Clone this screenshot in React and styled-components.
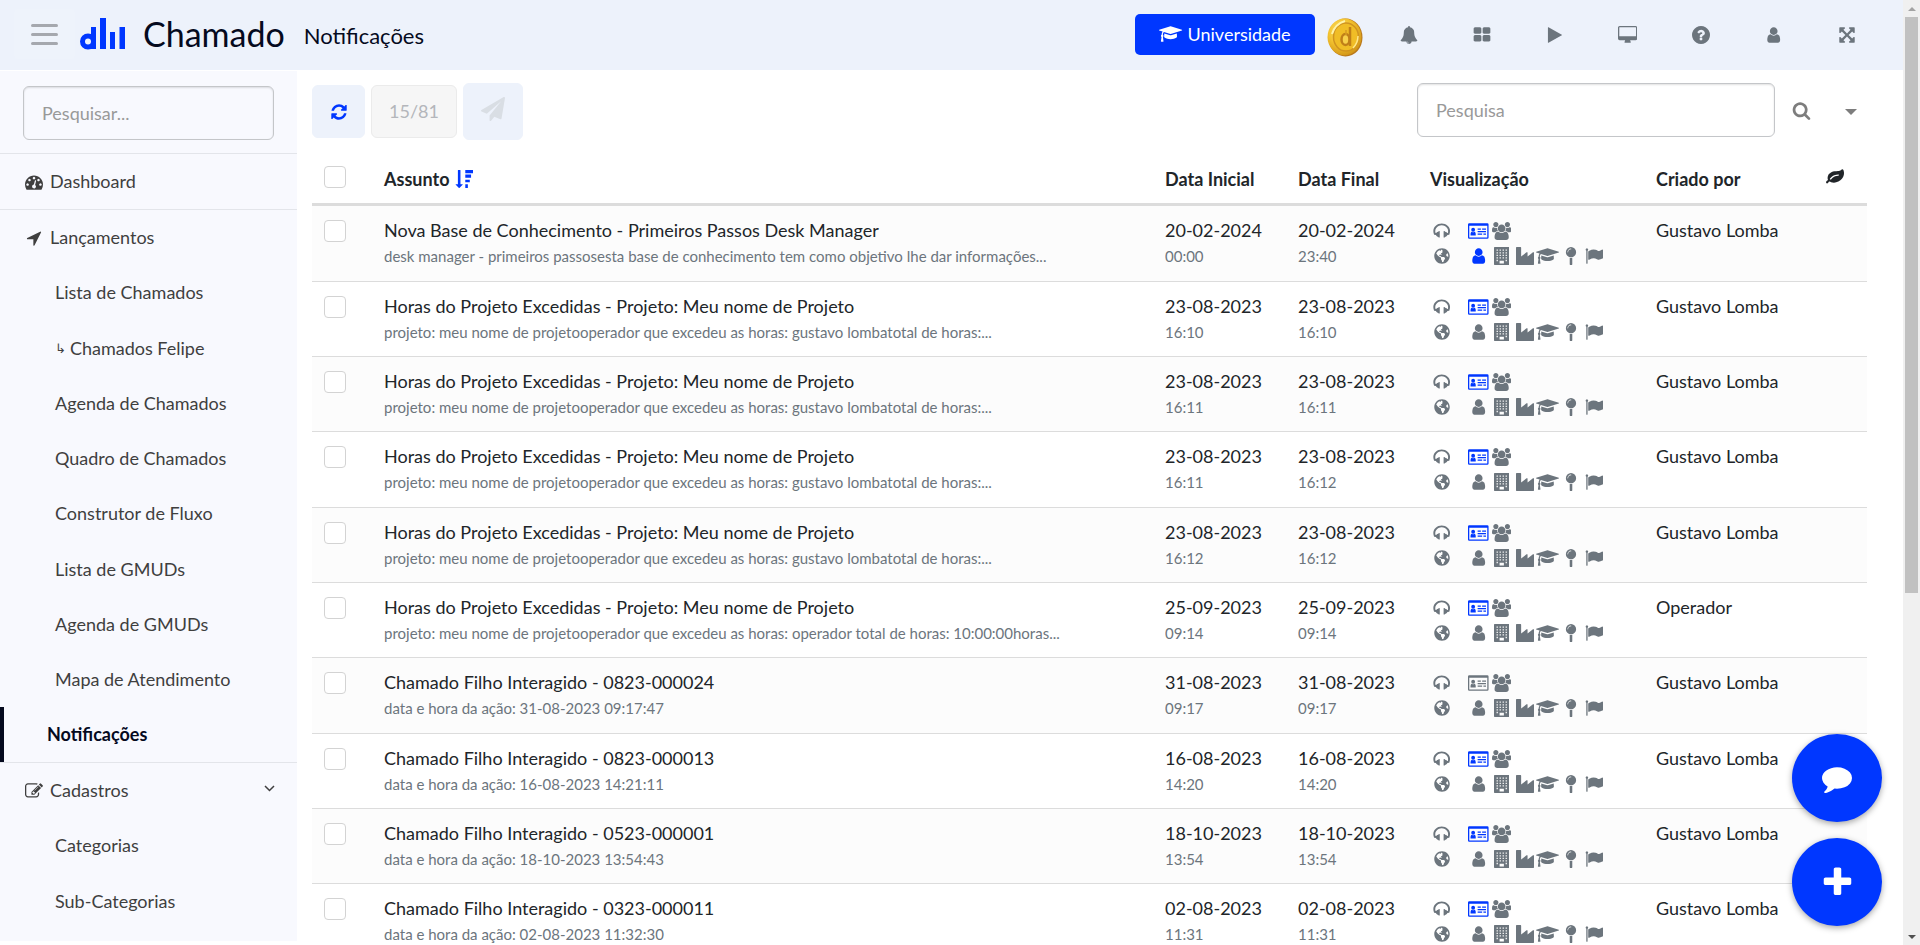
import { useState } from "react";
import styled, { createGlobalStyle } from "styled-components";
import { FaGlobeAmericas } from "react-icons/fa";

const GlobalStyle = createGlobalStyle`
  * {
    box-sizing: border-box;
  }
  body {
    margin: 0;
    background: #fff;
    color: #212529;
    font-family: Lato, "Liberation Sans", sans-serif;
    font-size: 18px;
    line-height: 27px;
  }
  button,
  input {
    font: inherit;
  }
`;

const Page = styled.div`
  display: flex;
  height: 100vh;
  overflow: hidden;
`;

const Screen = styled.div`
  flex: 1;
  min-width: 0;
  display: flex;
  flex-direction: column;
`;

const Header = styled.header`
  flex: none;
  display: flex;
  align-items: center;
  justify-content: space-between;
  height: 70px;
  padding: 0 20px 2px 14px;
  background: #edf2fb;
`;

const Brand = styled.div`
  display: flex;
  align-items: center;
`;

const MenuButton = styled.button`
  display: flex;
  flex-direction: column;
  align-items: center;
  justify-content: center;
  gap: 6px;
  width: 61px;
  height: 50px;
  padding: 0;
  margin-right: 5px;
  border: 0;
  border-radius: 4px;
  background: #eef3fb;
`;

const MenuLine = styled.span`
  width: 27px;
  height: 3px;
  border-radius: 2px;
  background: #a5a8ae;
`;

const AppName = styled.h1`
  margin: 0 19px 0 18px;
  font-size: 34px;
  font-weight: 400;
  line-height: 40px;
  color: #050a1e;
`;

const PageName = styled.h2`
  margin: 0;
  padding-top: 4px;
  font-size: 22px;
  font-weight: 400;
  line-height: 30px;
  color: #050a1e;
`;

const Actions = styled.div`
  display: flex;
  align-items: center;
`;

const University = styled.button`
  display: flex;
  align-items: center;
  justify-content: center;
  gap: 5px;
  width: 180px;
  height: 41px;
  padding: 0;
  border: 0;
  border-radius: 5px;
  background: #0037ff;
  color: #fff;
`;

const CoinButton = styled.button`
  display: flex;
  padding: 0;
  margin: 6px 9px 0 12px;
  border: 0;
  background: none;
`;

const HeaderButton = styled.button`
  display: flex;
  align-items: center;
  justify-content: center;
  width: 73px;
  height: 50px;
  padding: 2px 0 0;
  border: 0;
  background: none;
  color: #6c757d;
`;

const Body = styled.div`
  flex: 1;
  min-height: 0;
  display: flex;
  padding-top: 1px;
`;

const Sidebar = styled.aside`
  flex: none;
  width: 297px;
  margin-bottom: 4px;
  overflow: hidden;
  background: #f8f9fe;
`;

const TextField = styled.input`
  width: 100%;
  height: 54px;
  padding: 0 18px;
  border: 1px solid #c4c6c9;
  border-radius: 6px;
  background: transparent;
  box-shadow: inset 0 1px 2px rgba(0, 0, 0, 0.12);
  color: #212529;

  &::placeholder {
    color: #999;
    opacity: 1;
  }
`;

const SidebarSearch = styled.div`
  display: flex;
  padding: 15px 23px 13px;
`;

const NavGroup = styled.nav`
  border-top: 1px solid #e3e5ea;
`;

const GroupLink = styled.a`
  display: flex;
  align-items: center;
  height: 55px;
  padding: 0 22px 0 24px;
  color: #3f3f3f;
  text-decoration: none;
`;

const GroupIcon = styled.span`
  display: flex;
  justify-content: center;
  width: 20px;
  margin-right: 6px;
`;

const GroupLabel = styled.span`
  flex: 1;
`;

const SubLink = styled.a`
  display: flex;
  align-items: center;
  gap: 4px;
  height: 55px;
  padding-left: ${({ $active }) => ($active ? "43px" : "55px")};
  border-left: ${({ $active }) => ($active ? "4px solid #050a1e" : "0")};
  color: ${({ $active }) => ($active ? "#050a1e" : "#3f3f3f")};
  font-weight: ${({ $active }) => ($active ? 700 : 400)};
  text-decoration: none;

  &:nth-child(4n + 3) {
    height: 56px;
  }
`;

const Branch = styled.span`
  font-family: "DejaVu Sans", sans-serif;
  font-size: 13px;
`;

const Content = styled.main`
  flex: 1;
  min-width: 0;
  padding: 12px 36px 0 15px;
`;

const Toolbar = styled.div`
  display: flex;
  align-items: center;
  justify-content: space-between;
  height: 57px;
`;

const ToolGroup = styled.div`
  display: flex;
  align-items: center;
  gap: 6px;
`;

const ToolButton = styled.button`
  display: flex;
  align-items: center;
  justify-content: center;
  width: ${({ $width }) => $width}px;
  height: ${({ $height }) => $height || 53}px;
  padding: 0;
  border: 1px solid ${({ $plain }) => ($plain ? "#ebebeb" : "#edf2fb")};
  border-radius: 6px;
  background: ${({ $plain }) => ($plain ? "#f6f6f6" : "#edf2fb")};
  color: ${({ $color }) => $color};
`;

const SendButton = styled(ToolButton)`
  padding-bottom: 6px;
`;

const SearchGroup = styled.div`
  display: flex;
  align-items: center;
  height: 54px;
  margin-bottom: 3px;
`;

const SearchField = styled.div`
  display: flex;
  width: 358px;
`;

const SearchButton = styled.button`
  display: flex;
  align-items: center;
  justify-content: center;
  width: ${({ $width }) => $width}px;
  height: 54px;
  padding: 0;
  border: 0;
  background: none;
  color: #7d7d7d;
`;

const MoreButton = styled(SearchButton)`
  padding: 3px 0 0 6px;
`;

const Table = styled.table`
  width: 100%;
  margin-top: 8px;
  border-collapse: separate;
  border-spacing: 0;
  table-layout: fixed;
`;

const Col = styled.col`
  width: ${({ $width }) => $width};
`;

const Th = styled.th`
  height: 58px;
  padding: 7px 0 0;
  border-bottom: 3px solid #dcdcdc;
  font-weight: 700;
  text-align: left;
`;

const SortButton = styled.button`
  display: flex;
  align-items: center;
  gap: 6px;
  padding: 0;
  border: 0;
  background: none;
  color: inherit;

  svg {
    color: #0037ff;
  }
`;

const Row = styled.tr`
  height: 75px;

  &:nth-child(3n + 1) {
    height: 76px;
  }
  &:nth-child(odd) {
    background: #fcfcfc;
  }
`;

const Td = styled.td`
  padding: 11px 0 0;
  border-bottom: 1px solid #dcdcdc;
  vertical-align: top;
  white-space: nowrap;
`;

const CheckTh = styled(Th)`
  padding: 2px 0 0 12px;
`;

const CheckTd = styled(Td)`
  padding: 14px 0 0 12px;
`;

const VisibilityTd = styled(Td)`
  padding: 12px 0 0;
`;

const Check = styled.input`
  appearance: none;
  display: block;
  width: 22px;
  height: 22px;
  margin: 0;
  border: 1px solid #d3d3d3;
  border-radius: 4px;
  background: #fff;

  &:checked {
    background: #0037ff;
  }
`;

const Main = styled.div`
  overflow: hidden;
  text-overflow: ellipsis;
`;

const Sub = styled.div`
  overflow: hidden;
  text-overflow: ellipsis;
  font-size: 15px;
  line-height: 25px;
  color: #6c757d;
`;

const Visibility = styled.div`
  display: flex;
  align-items: center;
  height: 25px;
  color: #6c757d;
`;

const Slot = styled.span`
  display: flex;
  justify-content: center;
  width: ${({ $first }) => ($first ? "24px" : "23px")};
  margin-right: ${({ $first }) => ($first ? "13px" : "0")};
  color: ${({ $on }) => ($on ? "#0037ff" : "inherit")};
`;

const Floating = styled.div`
  position: fixed;
  right: 38px;
  bottom: 19px;
  display: flex;
  flex-direction: column;
  gap: 16px;
`;

const RoundButton = styled.button`
  display: flex;
  align-items: center;
  justify-content: center;
  width: 90px;
  height: 88px;
  padding: 0;
  border: 0;
  border-radius: 50%;
  background: #0037ff;
  box-shadow: 0 2px 6px rgba(0, 0, 0, 0.35);
  color: #fff;
`;

const ScrollTrack = styled.div`
  flex: none;
  display: flex;
  flex-direction: column;
  align-items: center;
  justify-content: space-between;
  width: 17px;
  background: #f0f0f0;
`;

const ScrollArrow = styled.div`
  display: flex;
  align-items: center;
  justify-content: center;
  height: 17px;
  color: ${({ $color }) => $color};
`;

const ScrollRail = styled.div`
  flex: 1;
  width: 13px;
`;

const ScrollThumb = styled.div`
  height: 63.2%;
  background: #c1c1c1;
`;

const ICONS = {
  user: [1536, "M1408 1399q0 109-62.5 187t-150.5 78h-854q-88 0-150.5-78t-62.5-187q0-85 8.5-160.5t31.5-152 58.5-131 94-89 134.5-34.5q131 128 313 128t313-128q76 0 134.5 34.5t94 89 58.5 131 31.5 152 8.5 160.5zm-256-887q0 159-112.5 271.5t-271.5 112.5-271.5-112.5-112.5-271.5 112.5-271.5 271.5-112.5 271.5 112.5 112.5 271.5z"],
  refresh: [1792, "M1639 1056q0 5-1 7-64 268-268 434.5t-478 166.5q-146 0-282.5-55t-243.5-157l-129 129q-19 19-45 19t-45-19-19-45v-448q0-26 19-45t45-19h448q26 0 45 19t19 45-19 45l-137 137q71 66 161 102t187 36q134 0 250-65t186-179q11-17 53-117 8-23 30-23h192q13 0 22.5 9.5t9.5 22.5zm25-800v448q0 26-19 45t-45 19h-448q-26 0-45-19t-19-45 19-45l138-138q-148-137-349-137-134 0-250 65t-186 179q-11 17-53 117-8 23-30 23h-199q-13 0-22.5-9.5t-9.5-22.5v-7q65-268 270-434.5t480-166.5q146 0 284 55.5t245 156.5l130-129q19-19 45-19t45 19 19 45z"],
  comment: [1792, "M1792 896q0 174-120 321.5t-326 233-450 85.5q-70 0-145-8-198 175-460 242-49 14-114 22-17 2-30.5-9t-17.5-29v-1q-3-4-.5-12t2-10 4.5-9.5l6-9 7-8.5 8-9q7-8 31-34.5t34.5-38 31-39.5 32.5-51 27-59 26-76q-157-89-247.5-220t-90.5-281q0-130 71-248.5t191-204.5 286-136.5 348-50.5q244 0 450 85.5t326 233 120 321.5z"],
  plus: [1792, "M1600 736v192q0 40-28 68t-68 28h-416v416q0 40-28 68t-68 28h-192q-40 0-68-28t-28-68v-416h-416q-40 0-68-28t-28-68v-192q0-40 28-68t68-28h416v-416q0-40 28-68t68-28h192q40 0 68 28t28 68v416h416q40 0 68 28t28 68z"],
  arrow: [1792, "M1593 349l-640 1280q-17 35-57 35-5 0-15-2-22-5-35.5-22.5t-13.5-39.5v-576h-576q-22 0-39.5-13.5t-22.5-35.5 4-42 29-30l1280-640q13-7 29-7 27 0 45 19 15 14 18.5 34.5t-6.5 39.5z"],
  search: [1792, "M1216 832q0-185-131.5-316.5t-316.5-131.5-316.5 131.5-131.5 316.5 131.5 316.5 316.5 131.5 316.5-131.5 131.5-316.5zm512 832q0 52-38 90t-90 38q-54 0-90-38l-343-342q-179 124-399 124-143 0-273.5-55.5t-225-150-150-225-55.5-273.5 55.5-273.5 150-225 225-150 273.5-55.5 273.5 55.5 225 150 150 225 55.5 273.5q0 220-124 399l343 343q37 37 37 90z"],
  bell: [1792, "M912 1696q0-16-16-16-59 0-101.5-42.5t-42.5-101.5q0-16-16-16t-16 16q0 73 51.5 124.5t124.5 51.5q16 0 16-16zm816-288q0 52-38 90t-90 38h-448q0 106-75 181t-181 75-181-75-75-181h-448q-52 0-90-38t-38-90q50-42 91-88t85-119.5 74.5-158.5 50-206 19.5-260q0-152 117-282.5t307-158.5q-8-19-8-39 0-40 28-68t68-28 68 28 28 68q0 20-8 39 190 28 307 158.5t117 282.5q0 139 19.5 260t50 206 74.5 158.5 85 119.5 91 88z"],
  users: [1920, "M593 896q-162 5-265 128h-134q-82 0-138-40.5t-56-118.5q0-353 124-353 6 0 43.5 21t97.5 42.5 119 21.5q67 0 133-23-5 37-5 66 0 139 81 256zm1071 637q0 120-73 189.5t-194 69.5h-874q-121 0-194-69.5t-73-189.5q0-53 3.5-103.5t14-109 26.5-108.5 43-97.5 62-81 85.5-53.5 111.5-20q10 0 43 21.5t73 48 107 48 135 21.5 135-21.5 107-48 73-48 43-21.5q61 0 111.5 20t85.5 53.5 62 81 43 97.5 26.5 108.5 14 109 3.5 103.5zm-1024-1277q0 106-75 181t-181 75-181-75-75-181 75-181 181-75 181 75 75 181zm704 384q0 159-112.5 271.5t-271.5 112.5-271.5-112.5-112.5-271.5 112.5-271.5 271.5-112.5 271.5 112.5 112.5 271.5zm576 225q0 78-56 118.5t-138 40.5h-134q-103-123-265-128 81-117 81-256 0-29-5-66 66 23 133 23 59 0 119-21.5t97.5-42.5 43.5-21q124 0 124 353zm-128-609q0 106-75 181t-181 75-181-75-75-181 75-181 181-75 181 75 75 181z"],
  graduation: [2304, "M1774 836l18 316q4 69-82 128t-235 93.5-323 34.5-323-34.5-235-93.5-82-128l18-316 574 181q22 7 48 7t48-7zm530-324q0 23-22 31l-1120 352q-4 1-10 1t-10-1l-652-206q-43 34-71 111.5t-34 178.5q63 36 63 109 0 69-58 107l58 433q2 14-8 25-9 11-24 11h-192q-15 0-24-11-10-11-8-25l58-433q-58-38-58-107 0-73 65-111 11-207 98-330l-333-104q-22-8-22-31t22-31l1120-352q4-1 10-1t10 1l1120 352q22 8 22 31z"],
  industry: [1792, "M448 0q26 0 45 19t19 45v891l536-429q17-14 40-14 26 0 45 19t19 45v379l536-429q17-14 40-14 26 0 45 19t19 45v1152q0 26-19 45t-45 19h-1664q-26 0-45-19t-19-45v-1664q0-26 19-45t45-19h384z"],
  desktop: [1920, "M1792 992v-832q0-13-9.5-22.5t-22.5-9.5h-1600q-13 0-22.5 9.5t-9.5 22.5v832q0 13 9.5 22.5t22.5 9.5h1600q13 0 22.5-9.5t9.5-22.5zm128-832v1088q0 66-47 113t-113 47h-544q0 37 16 77.5t32 71 16 43.5q0 26-19 45t-45 19h-512q-26 0-45-19t-19-45q0-14 16-44t32-70 16-78h-544q-66 0-113-47t-47-113v-1088q0-66 47-113t113-47h1600q66 0 113 47t47 113z"],
  grid: [1792, "M832 1024v384q0 52-38 90t-90 38h-512q-52 0-90-38t-38-90v-384q0-52 38-90t90-38h512q52 0 90 38t38 90zm0-768v384q0 52-38 90t-90 38h-512q-52 0-90-38t-38-90v-384q0-52 38-90t90-38h512q52 0 90 38t38 90zm896 768v384q0 52-38 90t-90 38h-512q-52 0-90-38t-38-90v-384q0-52 38-90t90-38h512q52 0 90 38t38 90zm0-768v384q0 52-38 90t-90 38h-512q-52 0-90-38t-38-90v-384q0-52 38-90t90-38h512q52 0 90 38t38 90z"],
  play: [1792, "M1576 927l-1328 738q-23 13-39.5 3t-16.5-36v-1472q0-26 16.5-36t39.5 3l1328 738q23 13 23 31t-23 31z"],
  question: [1792, "M1024 1376v-192q0-14-9-23t-23-9h-192q-14 0-23 9t-9 23v192q0 14 9 23t23 9h192q14 0 23-9t9-23zm256-672q0-88-55.5-163t-138.5-116-170-41q-243 0-371 213-15 24 8 42l132 100q7 6 19 6 16 0 25-12 53-68 86-92 34-24 86-24 48 0 85.5 26t37.5 59q0 38-20 61t-68 45q-63 28-115.5 86.5t-52.5 125.5v36q0 14 9 23t23 9h192q14 0 23-9t9-23q0-19 21.5-49.5t54.5-49.5q32-18 49-28.5t46-35 44.5-48 28-60.5 12.5-81zm512 192q0 244-120 450t-326 326-450 120-450-120-326-326-120-450 120-450 326-326 450-120 450 120 326 326 120 450z"],
  expand: [1792, "M1411 541l-355 355 355 355 144-144q29-31 70-14 39 17 39 59v448q0 26-19 45t-45 19h-448q-42 0-59-40-17-39 14-69l144-144-355-355-355 355 144 144q31 30 14 69-17 40-59 40h-448q-26 0-45-19t-19-45v-448q0-42 40-59 39-17 69 14l144 144 355-355-355-355-144 144q-19 19-45 19-12 0-24-5-40-17-40-59v-448q0-26 19-45t45-19h448q42 0 59 40 17 39-14 69l-144 144 355 355 355-355-144-144q-31-30-14-69 17-40 59-40h448q26 0 45 19t19 45v448q0 42-39 59-13 5-25 5-26 0-45-19z"],
  flag: [1792, "M320 256q0 72-64 110v1266q0 13-9.5 22.5t-22.5 9.5h-64q-13 0-22.5-9.5t-9.5-22.5v-1266q-64-38-64-110 0-53 37.5-90.5t90.5-37.5 90.5 37.5 37.5 90.5zm1472 64v763q0 25-12.5 38.5t-39.5 27.5q-215 116-369 116-61 0-123.5-22t-108.5-48-115.5-48-142.5-22q-192 0-464 146-17 9-33 9-26 0-45-19t-19-45v-742q0-32 31-55 21-14 79-43 236-120 421-120 107 0 200 29t219 88q38 19 88 19 54 0 117.5-21t110-47 88-47 54.5-21q26 0 45 19t19 45z"],
  pin: [1792, "M896 1088q66 0 128-15v655q0 26-19 45t-45 19h-128q-26 0-45-19t-19-45v-655q62 15 128 15zm0-1088q212 0 362 150t150 362-150 362-362 150-362-150-150-362 150-362 362-150zm0 224q14 0 23-9t9-23-9-23-23-9q-146 0-249 103t-103 249q0 14 9 23t23 9 23-9 9-23q0-119 84.5-203.5t203.5-84.5z"],
  headphones: [1792, "M1696 896q0 166-60 314l-20 49-185 33q-22 83-90.5 136.5t-156.5 53.5v32q0 14-9 23t-23 9h-64q-14 0-23-9t-9-23v-576q0-14 9-23t23-9h64q14 0 23 9t9 23v32q71 0 130 35.5t93 95.5l68-12q29-95 29-193 0-148-88-279t-236.500-209-315.500-78-315.500 78-236.500 209-88 279q0 98 29 193l68 12q34-60 93-95.500t130-35.500v-32q0-14 9-23t23-9h64q14 0 23 9t9 23v576q0 14-9 23t-23 9h-64q-14 0-23-9t-9-23v-32q-88 0-156.500-53.500t-90.500-136.500l-185-33-20-49q-60-148-60-314 0-151 67-291t179-242.500 266-163.500 320-61 320 61 266 163.500 179 242.500 67 291z"],
  edit: [1792, "M888 1184l116-116-152-152-116 116v56h96v96h56zm440-720q-16-16-33 1l-350 350q-17 17-1 33t33-1l350-350q17-17 1-33zm80 594v190q0 119-84.5 203.5t-203.5 84.5h-832q-119 0-203.5-84.5t-84.5-203.5v-832q0-119 84.5-203.5t203.5-84.5h832q63 0 117 25 15 7 18 23 3 17-9 29l-49 49q-14 14-32 8-23-6-45-6h-832q-66 0-113 47t-47 113v832q0 66 47 113t113 47h832q66 0 113-47t47-113v-126q0-13 9-22l64-64q15-15 35-7t20 29zm-96-738l288 288-672 672h-288v-288zm444 132l-92 92-288-288 92-92q28-28 68-28t68 28l152 152q28 28 28 68t-28 68z"],
  dashboard: [1792, "M384 1152q0-53-37.5-90.5t-90.5-37.5-90.5 37.5-37.5 90.5 37.5 90.5 90.5 37.5 90.5-37.5 37.5-90.5zm192-448q0-53-37.5-90.5t-90.5-37.5-90.5 37.5-37.5 90.5 37.5 90.5 90.5 37.5 90.5-37.5 37.5-90.5zm428 481l101-382q6-26-7.5-48.5t-38.5-29.5-48 6.5-30 39.5l-101 382q-60 5-107 43.5t-63 98.5q-20 77 20 146t117 89 146-20 89-117q16-60-6-117t-72-91zm660-33q0-53-37.5-90.5t-90.5-37.5-90.5 37.5-37.5 90.5 37.5 90.5 90.5 37.5 90.5-37.5 37.5-90.5zm-640-640q0-53-37.5-90.5t-90.5-37.5-90.5 37.5-37.5 90.5 37.5 90.5 90.5 37.5 90.5-37.5 37.5-90.5zm448 192q0-53-37.5-90.5t-90.5-37.5-90.5 37.5-37.5 90.5 37.5 90.5 90.5 37.5 90.5-37.5 37.5-90.5zm320 448q0 261-141 483-19 29-54 29h-1402q-35 0-54-29-141-221-141-483 0-182 71-348t191-286 286-191 348-71 348 71 286 191 191 286 71 348z"],
  leaf: [1792, "M1280 704q0-26-19-45t-45-19q-172 0-318 49.5t-259.5 134-235.5 219.5q-19 21-19 45 0 26 19 45t45 19q24 0 45-19 27-24 74-71t67-66q137-124 268.5-176t313.5-52q26 0 45-19t19-45zm512-198q0 95-20 193-46 224-184.5 383t-357.5 268q-214 108-438 108-148 0-286-47-15-5-88-42t-96-37q-16 0-39.5 32t-45 70-52.5 70-60 32q-43 0-63.5-17.5t-45.5-59.5q-2-4-6-11t-5.5-10-3-9.5-1.5-13.5q0-35 31-73.5t68-65.5 68-56 31-48q0-4-14-38t-16-44q-9-51-9-104 0-115 43.5-220t119-184.5 170.5-139 204-95.5q55-18 145-25.5t179.5-9 178.5-6 163.5-24 113.5-56.5l29.5-29.5 29.5-28 27-20 36.5-16 43.5-4.5q39 0 70.5 46t47.5 112 24 124 8 96z"],
  plane: [1792, "M1764 11q33 24 27 64l-256 1536q-5 29-32 45-14 8-31 8-11 0-24-5l-453-185-242 295q-18 23-49 23-13 0-22-4-19-7-30.5-23.5t-11.5-36.5v-349l864-1059-1069 925-395-162q-37-14-40-55-2-40 32-59l1664-960q15-9 32-9 20 0 36 11z"],
  sort: [1792, "M320 0h192q32 0 32 32v1376h192q22 0 29 20t-9 35l-320 320q-20 18-40 0l-320-320q-16-15-9-35t29-20h192v-1376q0-32 32-32zM1024 0h768v320h-768zM1024 448h576v320h-576zM1024 960h448v256h-448zM1024 1408h256v384h-256z"],
  building: [1536, "M64 0h1408q64 0 64 64v1664q0 64-64 64h-1408q-64 0-64-64v-1664q0-64 64-64zM256 256v128h128v-128zm300 0v128h128v-128zm300 0v128h128v-128zm300 0v128h128v-128zM256 512v128h128v-128zm300 0v128h128v-128zm300 0v128h128v-128zm300 0v128h128v-128zM256 768v128h128v-128zm300 0v128h128v-128zm300 0v128h128v-128zm300 0v128h128v-128zM256 1024v128h128v-128zm300 0v128h128v-128zm300 0v128h128v-128zm300 0v128h128v-128zM256 1280v128h128v-128zm900 0v128h128v-128zM556 1380v252h428v-252z"],
  card: [2048, "M128 128h1792q128 0 128 128v1280q0 128-128 128h-1792q-128 0-128-128v-1280q0-128 128-128zM128 384v1152h1792v-1152zM256 1344q-30-352 150-384 106 100 212 0 182 32 150 384zM704 768a192 192 0 1 1-384 0 192 192 0 1 1 384 0zM960 640h320v128h-320zM1408 640h384v128h-384zM960 896h832v128h-832zM960 1152h448v128h-448zM1536 1152h256v128h-256z"],
};

const Icon = ({ name, size = 18 }) => {
  const [width, path] = ICONS[name];
  return (
    <svg
      width={(width * size) / 1792}
      height={size}
      viewBox={`0 0 ${width} 1792`}
      fill="currentColor"
      fillRule="evenodd"
      aria-hidden="true"
    >
      <path d={path} />
    </svg>
  );
};

const Logo = () => (
  <svg width="45" height="32" viewBox="0 0 45 32" fill="#0037ff" aria-hidden="true">
    <circle cx="8" cy="23.5" r="5.5" fill="none" stroke="#0037ff" strokeWidth="5" />
    <path d="M11 9h5v22h-5zM20 0h6v31h-6zM30 14h5v17h-5zM39.500 9h5.500v22h-5.500z" />
  </svg>
);

const Coin = () => (
  <svg width="36" height="40" viewBox="0 0 36 40" aria-hidden="true">
    <defs>
      <radialGradient id="face" cx="40%" cy="35%" r="75%">
        <stop offset="0" stopColor="#ffe873" />
        <stop offset="0.5" stopColor="#f2c12e" />
        <stop offset="1" stopColor="#c98a12" />
      </radialGradient>
    </defs>
    <ellipse cx="18.500" cy="20.500" rx="17" ry="19" fill="#b9781b" />
    <ellipse cx="17.500" cy="20" rx="17" ry="18.500" fill="url(#face)" />
    <ellipse cx="19" cy="20" rx="12.500" ry="14" fill="#f0bd26" stroke="#d09420" strokeWidth="1.500" />
    <path d="M5 17Q8 7 18 4" fill="none" stroke="#fff3a8" strokeWidth="2" />
    <path d="M26 31Q31 26 31 19" fill="none" stroke="#ffe88a" strokeWidth="1.500" />
    <ellipse cx="18.500" cy="22.500" rx="4" ry="5.500" fill="#f7d04a" stroke="#c07f18" strokeWidth="2.500" />
    <path d="M23 10v19" stroke="#c07f18" strokeWidth="2.500" />
    <path d="M19 13v5" stroke="#d79c22" strokeWidth="1.500" />
  </svg>
);

const Chevron = () => (
  <svg width="11" height="14" viewBox="0 0 11 14" fill="none" stroke="currentColor" strokeWidth="1.500" aria-hidden="true">
    <path d="M1 2l4.500 4.500L10 2" />
  </svg>
);

const Triangle = ({ width, height, up }) => (
  <svg width={width} height={height} viewBox="0 0 10 5" preserveAspectRatio="none" fill="currentColor" aria-hidden="true">
    <path d={up ? "M0 5h10L5 0z" : "M0 0h10L5 5z"} />
  </svg>
);

const headerButtons = [
  ["bell", "Alertas"],
  ["grid", "Aplicativos"],
  ["play", "Iniciar"],
  ["desktop", "Monitor"],
  ["question", "Ajuda"],
  ["user", "Perfil"],
  ["expand", "Tela cheia"],
];

const groups = [
  { icon: "dashboard", label: "Dashboard", items: [] },
  {
    icon: "arrow",
    label: "Lançamentos",
    items: [
      { label: "Lista de Chamados" },
      { label: "Chamados Felipe", nested: true },
      { label: "Agenda de Chamados" },
      { label: "Quadro de Chamados" },
      { label: "Construtor de Fluxo" },
      { label: "Lista de GMUDs" },
      { label: "Agenda de GMUDs" },
      { label: "Mapa de Atendimento" },
      { label: "Notificações" },
    ],
  },
  {
    icon: "edit",
    label: "Cadastros",
    open: true,
    items: [{ label: "Categorias" }, { label: "Sub-Categorias" }],
  },
];

const projeto = "Horas do Projeto Excedidas - Projeto: Meu nome de Projeto";
const gustavo =
  "projeto: meu nome de projetooperador que excedeu as horas: gustavo lombatotal de horas:...";

const rows = [
  {
    title: "Nova Base de Conhecimento - Primeiros Passos Desk Manager",
    text: "desk manager - primeiros passosesta base de conhecimento tem como objetivo lhe dar informações...",
    date: "20-02-2024",
    start: "00:00",
    end: "23:40",
    on: ["card", "user"],
  },
  { title: projeto, text: gustavo, date: "23-08-2023", start: "16:10" },
  { title: projeto, text: gustavo, date: "23-08-2023", start: "16:11" },
  { title: projeto, text: gustavo, date: "23-08-2023", start: "16:11", end: "16:12" },
  { title: projeto, text: gustavo, date: "23-08-2023", start: "16:12" },
  {
    title: projeto,
    text: "projeto: meu nome de projetooperador que excedeu as horas: operador total de horas: 10:00:00horas...",
    date: "25-09-2023",
    start: "09:14",
    author: "Operador",
  },
  {
    title: "Chamado Filho Interagido - 0823-000024",
    text: "data e hora da ação: 31-08-2023 09:17:47",
    date: "31-08-2023",
    start: "09:17",
    on: [],
  },
  {
    title: "Chamado Filho Interagido - 0823-000013",
    text: "data e hora da ação: 16-08-2023 14:21:11",
    date: "16-08-2023",
    start: "14:20",
  },
  {
    title: "Chamado Filho Interagido - 0523-000001",
    text: "data e hora da ação: 18-10-2023 13:54:43",
    date: "18-10-2023",
    start: "13:54",
  },
  {
    title: "Chamado Filho Interagido - 0323-000011",
    text: "data e hora da ação: 02-08-2023 11:32:30",
    date: "02-08-2023",
    start: "11:31",
  },
];

const people = ["card", "users"];
const places = ["user", "building", "industry", "graduation", "pin", "flag"];

const NotificationRow = ({ row }) => {
  const on = row.on || ["card"];

  return (
    <Row>
      <CheckTd>
        <Check type="checkbox" aria-label={row.title} />
      </CheckTd>
      <Td>
        <Main>{row.title}</Main>
        <Sub>{row.text}</Sub>
      </Td>
      <Td>
        <Main>{row.date}</Main>
        <Sub>{row.start}</Sub>
      </Td>
      <Td>
        <Main>{row.date}</Main>
        <Sub>{row.end || row.start}</Sub>
      </Td>
      <VisibilityTd>
        <Visibility>
          <Slot $first>
            <Icon name="headphones" />
          </Slot>
          {people.map((name) => (
            <Slot key={name} $on={on.includes(name)}>
              <Icon name={name} />
            </Slot>
          ))}
        </Visibility>
        <Visibility>
          <Slot $first>
            <FaGlobeAmericas size={16} />
          </Slot>
          {places.map((name) => (
            <Slot key={name} $on={on.includes(name)}>
              <Icon name={name} />
            </Slot>
          ))}
        </Visibility>
      </VisibilityTd>
      <Td>
        <Main>{row.author || "Gustavo Lomba"}</Main>
      </Td>
      <Td />
    </Row>
  );
};

const App = () => {
  const [current, setCurrent] = useState("Notificações");

  return (
    <Page>
      <GlobalStyle />
      <Screen>
        <Header>
          <Brand>
            <MenuButton aria-label="Menu">
              <MenuLine />
              <MenuLine />
              <MenuLine />
            </MenuButton>
            <Logo />
            <AppName>Chamado</AppName>
            <PageName>Notificações</PageName>
          </Brand>
          <Actions>
            <University>
              <Icon name="graduation" />
              Universidade
            </University>
            <CoinButton aria-label="Moedas">
              <Coin />
            </CoinButton>
            {headerButtons.map(([name, label]) => (
              <HeaderButton key={name} aria-label={label}>
                <Icon name={name} />
              </HeaderButton>
            ))}
          </Actions>
        </Header>
        <Body>
          <Sidebar>
            <SidebarSearch>
              <TextField placeholder="Pesquisar..." aria-label="Pesquisar no menu" />
            </SidebarSearch>
            {groups.map((group) => (
              <NavGroup key={group.label}>
                <GroupLink href="#">
                  <GroupIcon>
                    <Icon name={group.icon} />
                  </GroupIcon>
                  <GroupLabel>{group.label}</GroupLabel>
                  {group.open && <Chevron />}
                </GroupLink>
                {group.items.map((item) => (
                  <SubLink
                    key={item.label}
                    href="#"
                    $active={item.label === current}
                    onClick={() => setCurrent(item.label)}
                  >
                    {item.nested && <Branch>↳</Branch>}
                    {item.label}
                  </SubLink>
                ))}
              </NavGroup>
            ))}
          </Sidebar>
          <Content>
            <Toolbar>
              <ToolGroup>
                <ToolButton $width={53} $color="#0037ff" aria-label="Atualizar">
                  <Icon name="refresh" />
                </ToolButton>
                <ToolButton $width={86} $color="#b4b6bb" $plain disabled>
                  15/81
                </ToolButton>
                <SendButton $width={60} $height={57} $color="#d9dee4" aria-label="Enviar" disabled>
                  <Icon name="plane" size={24} />
                </SendButton>
              </ToolGroup>
              <SearchGroup>
                <SearchField>
                  <TextField placeholder="Pesquisa" aria-label="Pesquisa" />
                </SearchField>
                <SearchButton $width={53} aria-label="Buscar">
                  <Icon name="search" size={19} />
                </SearchButton>
                <MoreButton $width={39} aria-label="Mais filtros">
                  <Triangle width={12} height={6} />
                </MoreButton>
              </SearchGroup>
            </Toolbar>
            <Table>
              <colgroup>
                <Col $width="72px" />
                <Col $width="auto" />
                <Col $width="133px" />
                <Col $width="132px" />
                <Col $width="226px" />
                <Col $width="170px" />
                <Col $width="41px" />
              </colgroup>
              <thead>
                <tr>
                  <CheckTh>
                    <Check type="checkbox" aria-label="Selecionar todos" />
                  </CheckTh>
                  <Th>
                    <SortButton>
                      Assunto <Icon name="sort" />
                    </SortButton>
                  </Th>
                  <Th>Data Inicial</Th>
                  <Th>Data Final</Th>
                  <Th>Visualização</Th>
                  <Th>Criado por</Th>
                  <Th>
                    <Icon name="leaf" />
                  </Th>
                </tr>
              </thead>
              <tbody>
                {rows.map((row) => (
                  <NotificationRow key={row.title + row.date + row.start + row.end} row={row} />
                ))}
              </tbody>
            </Table>
          </Content>
        </Body>
      </Screen>
      <ScrollTrack>
        <ScrollArrow $color="#a3a3a3">
          <Triangle width={8} height={4} up />
        </ScrollArrow>
        <ScrollRail>
          <ScrollThumb />
        </ScrollRail>
        <ScrollArrow $color="#505050">
          <Triangle width={8} height={4} />
        </ScrollArrow>
      </ScrollTrack>
      <Floating>
        <RoundButton aria-label="Conversar">
          <Icon name="comment" size={30} />
        </RoundButton>
        <RoundButton aria-label="Adicionar">
          <Icon name="plus" size={35} />
        </RoundButton>
      </Floating>
    </Page>
  );
};

export default App;
